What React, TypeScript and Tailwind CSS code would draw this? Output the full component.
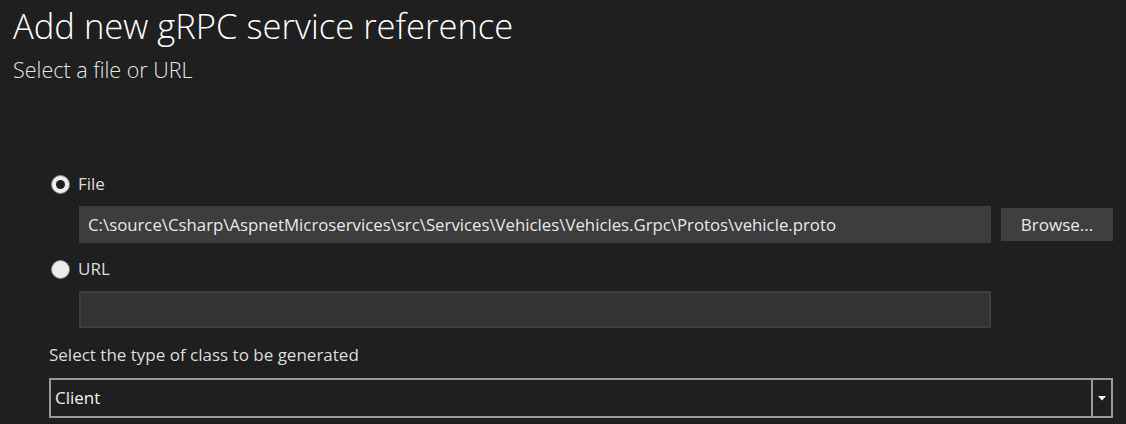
import React from 'react';

const Radio: React.FC<{ checked?: boolean; label: string }> = ({ checked, label }) => (
  <label className="flex items-center gap-[8px] h-[20px]">
    <span className="w-[19px] h-[19px] rounded-full bg-[#ededed] border border-[#8a8a8a] flex items-center justify-center">
      {checked && <span className="w-[9px] h-[9px] rounded-full bg-[#1f1f1f]" />}
    </span>
    <span className="text-[17px] text-[#dcdcdc]">{label}</span>
  </label>
);

export default function App() {
  return (
    <div
      className="w-[1126px] h-[424px] bg-[#1f1f1f] text-white overflow-hidden"
      style={{ fontFamily: '"Open Sans", "Noto Sans", sans-serif' }}
    >
      <div className="pl-[13px] pt-[4px]">
        <h1 className="text-[34.6px] font-light leading-[44px] text-white">Add new gRPC service reference</h1>
        <p className="text-[21.5px] font-light leading-[28px] mt-[8px] text-[#e6e6e6]">Select a file or URL</p>
      </div>

      <div className="pl-[51px] pr-[13px] mt-[90px]">
        <Radio checked label="File" />
        <div className="flex gap-[10px] mt-[12px] pl-[28px]">
          <div className="w-[912px] h-[37px] bg-[#3d3d3d] flex items-center px-[9px] text-[16.8px] text-[#e8e8e8] whitespace-nowrap">
            C:\source\Csharp\AspnetMicroservices\src\Services\Vehicles\Vehicles.Grpc\Protos\vehicle.proto
          </div>
          <button className="w-[112px] h-[33px] mt-[2px] bg-[#3f3f3f] text-[17px] text-[#e8e8e8]">Browse...</button>
        </div>
        <div className="mt-[16px]">
          <Radio label="URL" />
        </div>
        <div className="pl-[28px] mt-[12px]">
          <div className="w-[912px] h-[37px] bg-[#333333] border-2 border-[#3e3e3e]" />
        </div>
      </div>

      <div className="pl-[49px] pr-[13px] mt-[16px]">
        <div className="text-[17px] text-[#dcdcdc] leading-[22px]">Select the type of class to be generated</div>
        <div className="mt-[12px] h-[40px] w-[1064px] border-2 border-[#9a9a9a] flex">
          <div className="flex-1 flex items-center pl-[4px] text-[17px] text-[#f0f0f0]">Client</div>
          <div className="w-[20px] border-l-2 border-[#9a9a9a] flex items-center justify-center">
            <svg width="8" height="5" viewBox="0 0 8 5"><path d="M0 0h8L4 4.5z" fill="#ffffff" /></svg>
          </div>
        </div>
      </div>
    </div>
  );
}
